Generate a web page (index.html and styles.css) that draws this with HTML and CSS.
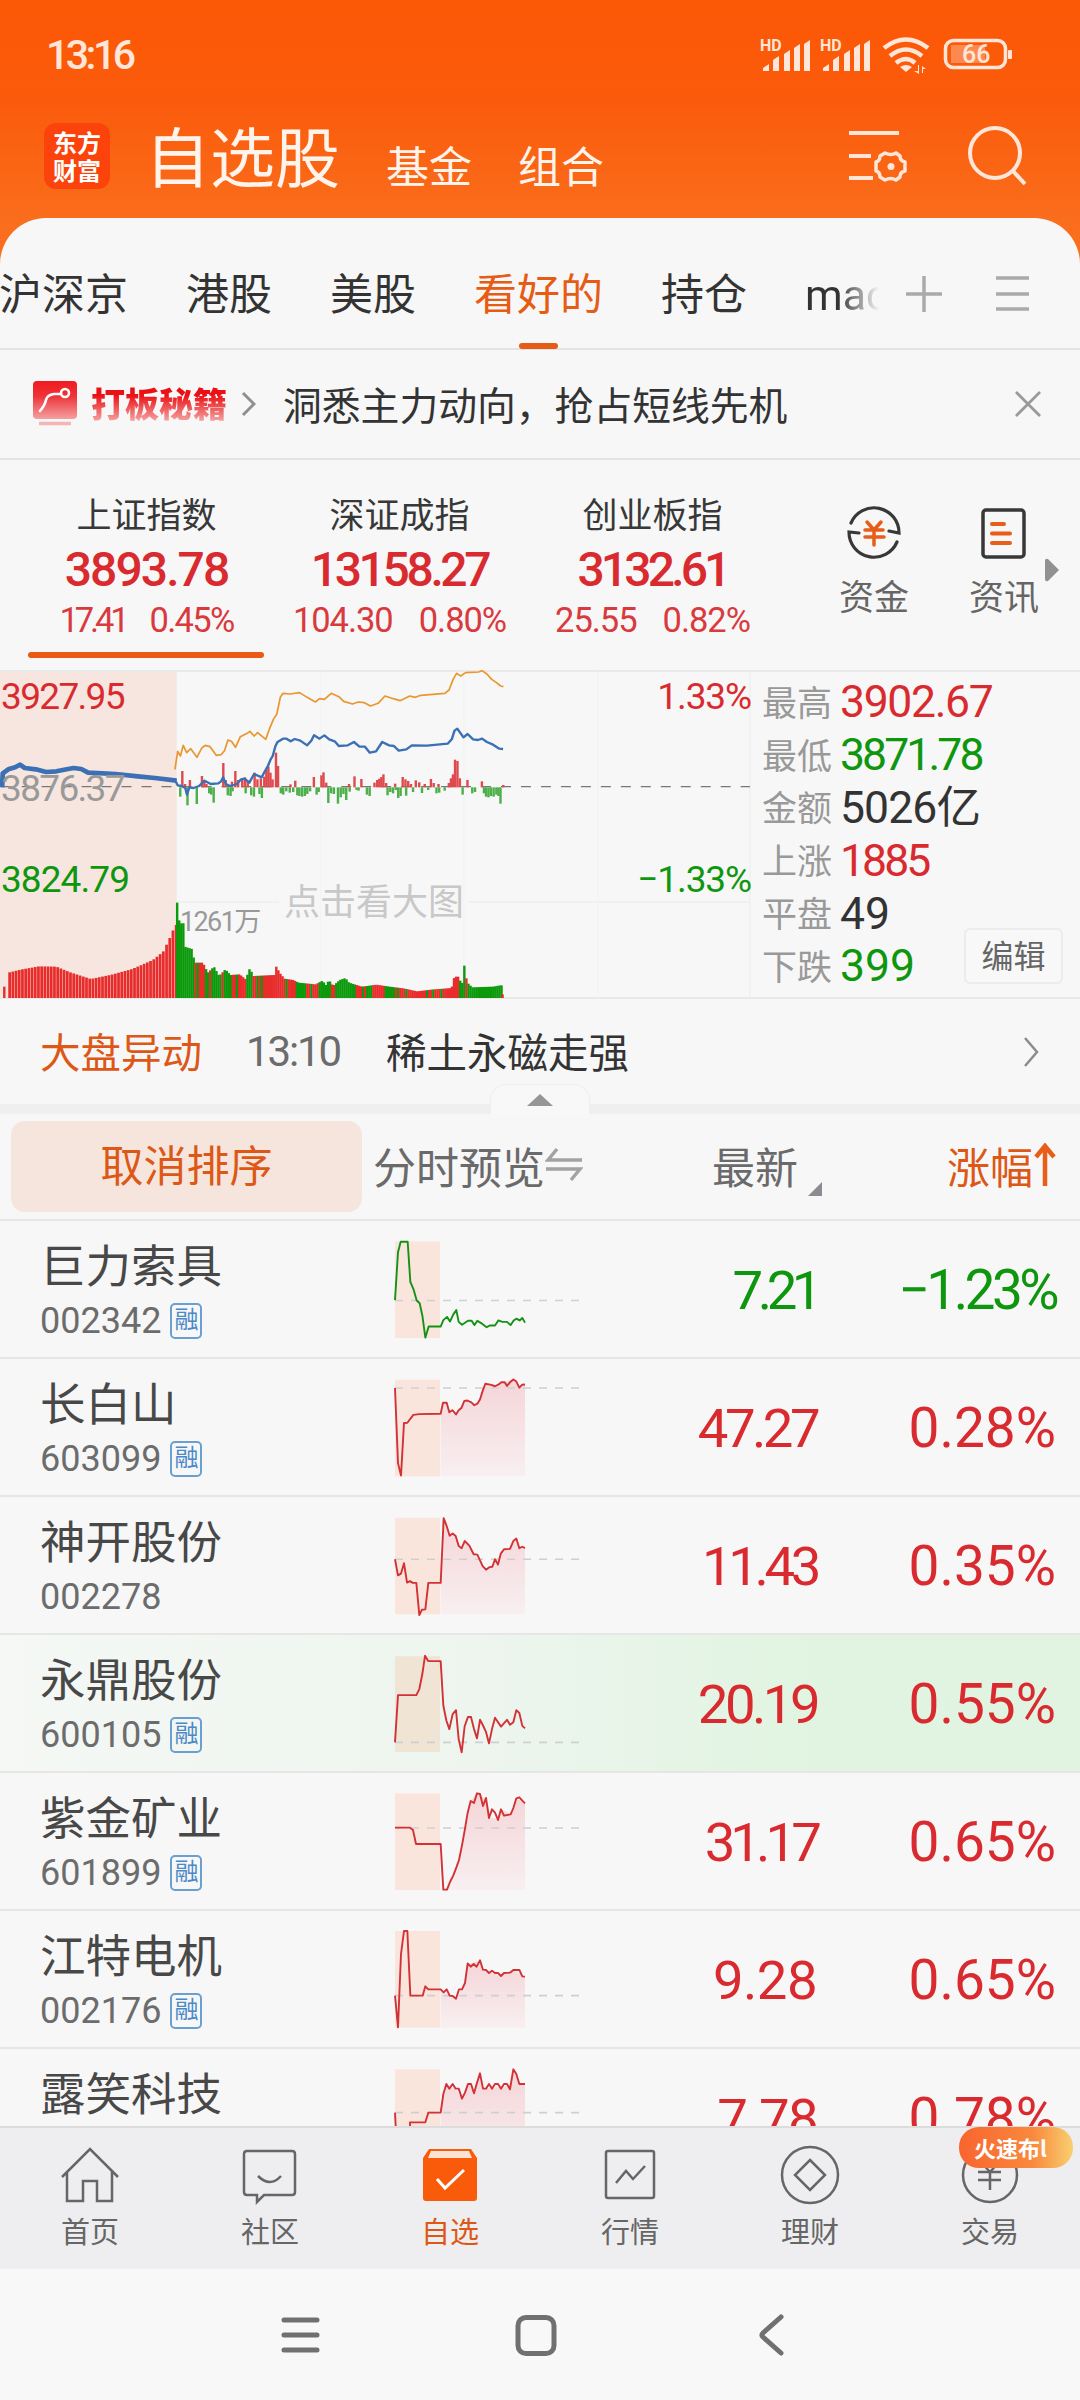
FILE: index.html
```html
<!DOCTYPE html>
<html lang="zh-CN">
<head>
  <meta charset="UTF-8">
  <title>自选股</title>
  <link rel="stylesheet" href="styles.css">
</head>
<body>
  <!-- Status bar -->
  <div class="status">
    <span class="clock">13:16</span>
    <svg class="status-icons" width="260" height="44" viewBox="0 0 260 44">
      <g fill="#ffe6d8">
        <text x="0" y="15" class="hd">HD</text>
        <text x="60" y="15" class="hd">HD</text>
        <path d="M3 35v-3l6-4v7zM13 35V24l6-4v15zM24 35V18l6-4v21zM34 35V12l6-4v27zM44 35V8l6-4v31z"/>
        <path d="M63 35v-3l6-4v7zM73 35V24l6-4v15zM84 35V18l6-4v21zM94 35V12l6-4v27zM104 35V8l6-4v31z"/>
        <path d="M140 31l6 5 6-5q-6-4-12 0z"/>
        <path d="M158 29v6h-4l5 3v-9zM162 37v-7l4 3h-3v4z"/>
        <rect x="248" y="14" width="4" height="9" rx="1"/>
        <rect x="191" y="9" width="34" height="18" opacity=".35"/>
      </g>
      <g fill="none" stroke="#ffe6d8">
        <path d="M124 12q22-17 44 0M130 20q16-13 32 0M136 27q10-8 19 0" stroke-width="4.5"/>
        <rect x="185.500" y="4.500" width="60" height="27" rx="8" stroke-width="3.500"/>
      </g>
      <text x="202" y="27" class="battery">66</text>
    </svg>
  </div>

  <!-- App header -->
  <div class="header">
    <div class="logo"><span>东方</span><span>财富</span></div>
    <span class="title">自选股</span>
    <span class="sub">基金</span>
    <span class="sub">组合</span>
    <svg class="manage" width="62" height="60" viewBox="0 0 62 60" fill="none" stroke="#ffe6d8" stroke-width="4">
      <path d="M1 7h50M1 30h22M1 52h24"/>
      <path d="M37 27q6 3 11 0l4 3q0 5 5 6v9q-5 1-5 6l-4 3q-5-3-11 0l-5-3q0-5-4-6v-9q4-1 4-6z" stroke-width="3.500" stroke-linejoin="round"/>
      <circle cx="43" cy="40.500" r="3.500" fill="#ffe6d8" stroke="none"/>
    </svg>
    <svg width="62" height="62" viewBox="0 0 62 62" fill="none" stroke="#ffe6d8" stroke-width="4">
      <circle cx="29" cy="29" r="25"/><path d="M46 46l13 14"/>
    </svg>
  </div>

  <div class="sheet">
    <!-- Group tabs -->
    <div class="tabs">
      <span>沪深京</span>
      <span>港股</span>
      <span>美股</span>
      <span class="active">看好的</span>
      <span>持仓</span>
      <span class="fade">mac</span>
      <svg class="tab-tools" width="124" height="40" viewBox="0 0 124 40" stroke="#aaa" stroke-width="3.500">
        <path d="M0 20h36M18 2v36M90 4h33M90 20h33M90 35h33"/>
      </svg>
    </div>

    <!-- Promo strip -->
    <div class="promo">
      <svg width="44" height="46" viewBox="0 0 44 46">
        <defs>
          <linearGradient id="promoRed" x1="0" y1="0" x2="0" y2="1">
            <stop offset="0" stop-color="#ef1a1f"/><stop offset=".4" stop-color="#ee3338"/><stop offset="1" stop-color="#f4a0a0"/>
          </linearGradient>
          <linearGradient id="areaRed" x1="0" y1="0" x2="0" y2="1">
            <stop offset="0" stop-color="#f5d5d8"/><stop offset="1" stop-color="#f8eff1"/>
          </linearGradient>
        </defs>
        <rect width="44" height="38" rx="4" fill="url(#promoRed)"/>
        <path d="M7 30q5-6 6-11t8-6h7" fill="none" stroke="#fff" stroke-width="2.600" stroke-linecap="round"/>
        <circle cx="32" cy="12" r="4" fill="none" stroke="#fff" stroke-width="2.600"/>
        <path d="M6 42.500h32" stroke="#f3b5b5" stroke-width="3.500"/>
      </svg>
      <b>打板秘籍</b>
      <svg width="15" height="26" viewBox="0 0 15 26" fill="none" stroke="#8f8f8f" stroke-width="3"><path d="M2 2l11 11L2 24"/></svg>
      <span>洞悉主力动向，抢占短线先机</span>
      <svg class="close" width="28" height="28" viewBox="0 0 28 28" stroke="#999" stroke-width="2.800"><path d="M2 2l24 24M26 2L2 26"/></svg>
    </div>

    <!-- Market indexes -->
    <div class="indexes">
      <div class="index current">
        <span>上证指数</span>
        <strong class="ls4">3893.78</strong>
        <p><i class="ls10">17.41</i><i>0.45%</i></p>
      </div>
      <div class="index">
        <span>深证成指</span>
        <strong class="ls7">13158.27</strong>
        <p><i>104.30</i><i>0.80%</i></p>
      </div>
      <div class="index">
        <span>创业板指</span>
        <strong class="ls8">3132.61</strong>
        <p><i>25.55</i><i>0.82%</i></p>
      </div>
      <div class="quick">
        <svg width="56" height="56" viewBox="0 0 56 56" fill="none" stroke="#383838" stroke-width="3.200" stroke-linecap="round">
          <path d="M5 18a25 25 0 0 1 48 10l-10-2M51 37A25 25 0 0 1 3 27l10 1"/>
          <path d="M21 17l7 8 7-8M19 25h18M19 32h19M28 25v15" stroke="#e85d17" stroke-width="3.500"/>
        </svg>
        <span>资金</span>
      </div>
      <div class="quick news">
        <svg width="56" height="56" viewBox="0 0 56 56" fill="none" stroke="#383838" stroke-width="3.500" stroke-linecap="round">
          <rect x="7" y="5" width="41" height="47" rx="3"/>
          <path d="M16 19h12M16 28.500h18M16 38h18" stroke="#e85d17" stroke-width="4"/>
        </svg>
        <span>资讯</span>
      </div>
      <svg class="more" width="14" height="24" viewBox="0 0 14 24" fill="#919191"><path d="M0 3Q0 0 3 1l11 11L3 23Q0 24 0 21z"/></svg>
    </div>

    <!-- Index chart -->
    <div class="market">
      <div class="chart">
        <svg width="751" height="330" viewBox="0 60 2181 990" preserveAspectRatio="none" fill="none">
          <rect x="0" y="66" width="513" height="978" fill="#f6e6df"/>
          <path d="M0 756H810M1362 756H2178M0 1044H2178M2178 60V1044" stroke="#e9e9e9" stroke-width="2.500"/>
          <path d="M1347 60V1044M930 60V1044M1737 60V1044" stroke="#f1f1f1" stroke-width="2.500"/>
          <path d="M0 410H2178" stroke="#777" stroke-width="4" stroke-dasharray="29 29" stroke-dashoffset="-5"/>
          <g id="bars"></g>
          <path d="M6 412L8 370 24 358 44 352 58 344 72 354 104 358 134 366 164 364 194 358 214 354 236 357 256 368 336 372 400 379 450 384 513 392" stroke="#3c70b4" stroke-width="14" stroke-linejoin="round"/>
          <path d="M508 390L516 406 528 408 538 414 543 434 550 412 562 414 578 408 594 392 612 402 634 400 642 394 648 382 656 402 668 408 688 402 700 388 710 386 724 398 738 372 760 382 768 366 778 348 786 328 792 318 800 288 806 276 822 266 832 266 844 274 856 267 872 272 892 286 904 272 912 256 928 266 942 256 956 268 972 274 984 288 1010 286 1028 276 1044 290 1060 290 1074 308 1092 304 1110 276 1130 286 1144 288 1158 302 1180 298 1196 286 1240 287 1300 281 1312 268 1320 242 1328 236 1346 262 1358 252 1374 268 1388 270 1400 266 1414 276 1432 284 1450 296 1461 297" stroke="#3c70b4" stroke-width="7" stroke-linejoin="round"/>
          <path d="M508 358l8-54 8 14 8-32 10 22 12-12 18 26 14-28 10-8 14 4 18 26 14-2 10-12 10-32 10 4 12 18 14-32 20-10 8-6 12 14 10-10 24 20 10-30 12-30 10-16 10-50 8-12 20 2 28-4 22 14 24 14 12-10 14 2 20-18 22 10 14 14 26 8 16-6 18 2 18 10 22-8 20-22 24 8 20 6 28-14 16 4 16-6 70-6 12-10 12-32 10-18 12 8 14-10 38-2 10-4 14 10 14 16 14 10 12 10 8 2" stroke="#e9972f" stroke-width="5" stroke-linejoin="round"/>
        </svg>
        <span class="high red">3927.95</span>
        <span class="mid">3876.37</span>
        <span class="low green">3824.79</span>
        <span class="high right red">1.33%</span>
        <span class="low right green">−1.33%</span>
        <span class="volume">1261万</span>
        <span class="hint">点击看大图</span>
      </div>
      <dl class="stats">
        <div><dt>最高</dt><dd class="red ls3">3902.67</dd></div>
        <div><dt>最低</dt><dd class="green ls6">3871.78</dd></div>
        <div><dt>金额</dt><dd class="ls2">5026亿</dd></div>
        <div><dt>上涨</dt><dd class="red ls6">1885</dd></div>
        <div><dt>平盘</dt><dd>49</dd></div>
        <div><dt>下跌</dt><dd class="green">399</dd></div>
        <button>编辑</button>
      </dl>
    </div>

    <!-- Market alert -->
    <div class="alert">
      <span class="orange">大盘异动</span>
      <time>13:10</time>
      <span>稀土永磁走强</span>
      <svg width="18" height="34" viewBox="0 0 18 34" fill="none" stroke="#8c8c8c" stroke-width="2.500"><path d="M3 3l12 14L3 31"/></svg>
    </div>
    <div class="band"><div class="handle"></div></div>

    <!-- Watch list -->
    <div class="list-head">
      <div class="cancel">取消排序</div>
      <div class="preview">分时预览<svg width="38" height="36" viewBox="0 0 38 36" fill="none" stroke="#a3a3a3" stroke-width="3.500"><path d="M12 2L3 13h34M1 22h34L26 33"/></svg></div>
      <div class="latest">最新</div>
      <div class="change">涨幅<svg width="24" height="44" viewBox="0 0 24 44" fill="none" stroke="#e85d17" stroke-width="4.500"><path d="M12 43V4M3 14l9-11 9 11"/></svg></div>
    </div>
    <div class="list">
      <div class="row">
        <div class="stock"><b>巨力索具</b><span>002342<em>融</em></span></div>
        <svg class="spark" viewBox="0 26 720 386" preserveAspectRatio="none">
          <rect x="105" y="86" width="135" height="270"/>
          <path class="base" d="M105 251H660"/>
          <path class="line down" d="M105 250l9-134 8-29h21l8 112 10 22 9 30 9 8 8 34 9 62 10-31h36l8-18 11-9 9 13 10-20 9-12 7 33 10 8 18-11h11l8 12 9-12 14 8 14 10 9-5h16l10-14 12 4h14l11 9 9-13 8-5 10 5 8-7 8 13"/>
        </svg>
        <div class="price green ls10">7.21</div><div class="pct green ls6">−1.23%</div>
      </div>
      <div class="row">
        <div class="stock"><b>长白山</b><span>603099<em>融</em></span></div>
        <svg class="spark" viewBox="0 412 720 386" preserveAspectRatio="none">
          <rect x="105" y="473" width="135" height="270"/>
          <path class="area" d="M242 568L249 537 260 537 268 562 288 570 313 532 342 543 360 528 376 485 405 491 432 480 460 472 478 495 495 486V743H242z"/>
          <path class="base" d="M105 496H660"/>
          <path class="line" d="M105 496L114 706 123 741 132 594 142 593 160 571 178 569 242 568 249 537 260 537 268 564 277 558 288 570 296 558 304 552 313 532 322 531 334 536 343 544 352 540 360 528 368 504 376 484 394 487 405 491 416 486 424 480 434 480 441 490 450 480 460 472 469 478 478 495 486 487 495 486"/>
        </svg>
        <div class="price ls6">47.27</div><div class="pct">0.28%</div>
      </div>
      <div class="row">
        <div class="stock"><b>神开股份</b><span>002278</span></div>
        <svg class="spark" viewBox="0 798 720 386" preserveAspectRatio="none">
          <rect x="105" y="859" width="135" height="270"/>
          <path class="area" d="M242 1040L251 862 269 908 286 908 304 945 315 924 342 960 376 1003 396 996 432 947 450 946 469 918 478 945 495 944V1129H242z"/>
          <path class="base" d="M105 975H660"/>
          <path class="line" d="M105 975L114 1020 123 1015 132 986 141 1040 150 1036 158 1041 169 1041 178 1131 186 1116 196 1115 205 1041 242 1041 251 860 260 882 269 909 278 903 287 910 296 938 305 944 314 924 328 937 341 961 352 962 368 994 378 1004 388 997 397 996 405 975 414 990 422 960 432 947 450 946 460 924 469 917 478 944 487 940 495 944"/>
        </svg>
        <div class="price ls8">11.43</div><div class="pct">0.35%</div>
      </div>
      <div class="row flash">
        <div class="stock"><b>永鼎股份</b><span>600105<em>融</em></span></div>
        <svg class="spark" viewBox="0 1184 720 386" preserveAspectRatio="none">
          <rect x="105" y="1246" width="135" height="268"/>
          <path class="base" d="M105 1487H660"/>
          <path class="line" d="M105 1487L114 1355 169 1355 178 1338 187 1296 195 1245 205 1260 242 1260 250 1384 259 1426 268 1450 278 1408 288 1397 296 1478 305 1515 314 1442 324 1416 333 1416 342 1450 351 1476 360 1424 369 1440 378 1458 387 1490 396 1450 405 1418 423 1443 441 1424 450 1438 460 1431 469 1397 478 1405 487 1441 495 1448"/>
        </svg>
        <div class="price ls6">20.19</div><div class="pct">0.55%</div>
      </div>
      <div class="row">
        <div class="stock"><b>紫金矿业</b><span>601899<em>融</em></span></div>
        <svg class="spark" viewBox="0 4 720 414" preserveAspectRatio="none">
          <rect x="105" y="68" width="135" height="290"/>
          <path class="area" d="M262 356L296 266 316 166 332 92 350 68 378 84 387 140 414 146 423 116 452 130 469 82 495 97V358H262z"/>
          <path class="base" d="M105 172H660"/>
          <path class="line" d="M105 171L150 171 159 178 168 220 242 220 250 357 261 357 270 334 280 314 290 288 297 268 306 224 315 174 323 126 332 91 342 97 351 68 360 70 369 106 378 82 387 142 396 116 405 126 414 148 423 116 432 135 452 131 460 112 469 83 478 80 487 90 495 98"/>
        </svg>
        <div class="price ls9">31.17</div><div class="pct">0.65%</div>
      </div>
      <div class="row">
        <div class="stock"><b>江特电机</b><span>002176<em>融</em></span></div>
        <svg class="spark" viewBox="0 418 720 414" preserveAspectRatio="none">
          <rect x="105" y="481" width="135" height="290"/>
          <path class="area" d="M242 657L288 683 314 638 323 580 360 570 369 598 423 616 460 598 495 618V771H242z"/>
          <path class="base" d="M105 675H660"/>
          <path class="line" d="M105 675L114 770 123 550 132 481 142 481 151 675 188 675 196 647 205 656 242 656 251 665 260 656 269 675 278 676 288 684 297 656 306 656 315 637 323 578 332 588 341 580 350 588 360 569 369 597 378 598 387 607 396 600 405 607 414 607 423 616 432 607 450 606 460 598 478 598 487 617 495 618"/>
        </svg>
        <div class="price ls1">9.28</div><div class="pct">0.65%</div>
      </div>
      <div class="row">
        <div class="stock"><b>露笑科技</b><span>002617</span></div>
        <svg class="spark" viewBox="0 832 720 414" preserveAspectRatio="none">
          <rect x="105" y="896" width="135" height="290"/>
          <path class="area" d="M242 1026L256 940 286 954 306 984 326 940 342 966 360 912 370 954 446 946 460 896 478 940 495 940V1186H242z"/>
          <path class="base" d="M105 1026H660"/>
          <path class="line" d="M105 1026L108 1086M150 1080L150 1055 196 1055 205 1026 242 1026 250 970 259 940 268 954 278 940 287 954 296 954 306 984 315 966 324 940 333 940 342 968 351 936 360 908 369 954 378 954 387 940 396 954 405 940 414 940 423 954 432 940 441 940 450 956 460 896 469 910 478 940 495 940"/>
        </svg>
        <div class="price ls3">7.78</div><div class="pct">0.78%</div>
      </div>
    </div>
  </div>

  <!-- Bottom tabs -->
  <div class="bottom-nav">
    <div class="item">
      <svg width="60" height="60" viewBox="0 0 60 60"><path d="M2 32L30 4l28 28M7 27v29h16V36h14v20h15V27"/></svg>
      <span>首页</span>
    </div>
    <div class="item">
      <svg width="60" height="60" viewBox="0 0 60 60"><path d="M7 6h45q3 0 3 3v38q0 3-3 3H24l-7 7v-7H7q-3 0-3-3V9q0-3 3-3zM18 31q12 12 23 0"/></svg>
      <span>社区</span>
    </div>
    <div class="item on">
      <svg width="60" height="60" viewBox="0 0 60 60">
        <path d="M9 4h42l6 9v40q0 3-3 3H6q-3 0-3-3V13z" fill="#f95b0b" stroke="none"/>
        <path d="M11 6h38l3 7H8z" fill="#fde3d3" stroke="none"/>
        <path d="M17 34l8 9 19-18" stroke="#fff" stroke-width="3"/>
      </svg>
      <span>自选</span>
    </div>
    <div class="item">
      <svg width="60" height="60" viewBox="0 0 60 60"><rect x="6" y="6" width="48" height="47" rx="2"/><path d="M16 38l10-12 7 8 12-13"/></svg>
      <span>行情</span>
    </div>
    <div class="item">
      <svg width="60" height="60" viewBox="0 0 60 60"><circle cx="30" cy="30" r="28"/><path d="M30 15l15 15-15 15-15-15z"/></svg>
      <span>理财</span>
    </div>
    <div class="item">
      <svg width="60" height="60" viewBox="0 0 60 60"><circle cx="30" cy="30" r="27"/><path d="M20 16l10 11 10-11M18 27h23M18 35h23M30 27v18"/></svg>
      <span>交易</span>
      <div class="tag">火速布l</div>
    </div>
  </div>

  <!-- System navigation -->
  <div class="system">
    <svg width="510" height="50" viewBox="0 0 510 50" fill="none" stroke="#707070" stroke-width="5" stroke-linecap="round" stroke-linejoin="round">
      <path d="M5 10h33M5 25h33M5 40h33"/>
      <rect x="239" y="7.500" width="36" height="36" rx="8"/>
      <path d="M502 7L484 23q-2 2 0 4l18 16"/>
    </svg>
  </div>

  <script>
    const bars = document.getElementById('bars');

    function bar(x, top, bottom, color, width) {
      bars.innerHTML += `<rect x="${x}" y="${top}" width="${width}" height="${bottom - top}" fill="${color}"/>`;
    }

    // linear interpolation between [x, y] points
    function at(points, x) {
      for (let i = 1; i < points.length; i++) {
        if (x <= points[i][0]) {
          const [x0, y0] = points[i - 1];
          const [x1, y1] = points[i];
          return y0 + (y1 - y0) * (x - x0) / (x1 - x0);
        }
      }
      return points[points.length - 1][1];
    }

    // call auction volume
    const auction = [[24, 967], [55, 959], [110, 949], [160, 950], [200, 967], [260, 987], [320, 974], [380, 957], [440, 930], [470, 905], [490, 862], [505, 825]];
    bar(9, 1010, 1044, '#e82c2c', 7);
    for (let x = 24; x < 508; x += 9.3) {
      bar(x, at(auction, x), 1044, '#e82c2c', 8);
    }

    // session volume, green ranges are falling minutes
    const session = [[508, 960], [513, 758], [520, 820], [532, 820], [535, 890], [556, 897], [564, 938], [588, 938], [602, 968], [620, 950], [635, 978], [653, 958], [668, 975], [695, 973], [712, 988], [724, 955], [735, 978], [795, 975], [801, 950], [812, 970], [825, 986], [850, 990], [866, 998], [915, 1003], [935, 992], [945, 1005], [954, 990], [966, 1008], [985, 990], [1002, 984], [1012, 998], [1050, 1010], [1092, 1004], [1130, 1010], [1170, 1015], [1210, 1024], [1250, 1019], [1310, 1014], [1318, 980], [1332, 980], [1337, 1000], [1344, 998], [1348, 930], [1354, 996], [1370, 1012], [1430, 1010], [1452, 1006]];
    const falling = [[511, 538], [542, 562], [570, 575], [598, 608], [616, 640], [648, 672], [684, 688], [715, 732], [744, 748], [756, 762], [828, 836], [858, 888], [904, 908], [928, 958], [975, 995], [999, 1030], [1050, 1054], [1065, 1082], [1115, 1145], [1154, 1158], [1178, 1184], [1236, 1240], [1254, 1262], [1278, 1284], [1335, 1350], [1360, 1456]];
    for (let x = 511; x < 1456; x += 6) {
      const green = falling.some(r => x >= r[0] - 3 && x <= r[1] - 2);
      bar(x, at(session, x + 2), 1044, green ? '#0c9a0c' : '#e82c2c', 7);
    }
    bar(1456, 1033, 1044, '#e82c2c', 7);

    // buy / sell strength around the previous close
    const up = [[526, 363], [534, 402], [548, 390], [583, 378], [590, 392], [596, 402], [645, 339], [652, 390], [670, 395], [680, 363], [688, 390], [700, 388], [708, 382], [716, 392], [736, 368], [744, 388], [754, 385], [764, 380], [770, 360], [776, 350], [782, 368], [788, 388], [798, 308], [804, 348], [840, 403], [854, 392], [908, 381], [930, 376], [936, 367], [944, 398], [1010, 402], [1026, 379], [1046, 387], [1084, 398], [1092, 390], [1098, 386], [1104, 381], [1110, 373], [1118, 399], [1144, 401], [1166, 381], [1174, 388], [1182, 393], [1190, 402], [1204, 391], [1214, 397], [1230, 402], [1248, 387], [1256, 399], [1270, 402], [1300, 399], [1306, 385], [1312, 373], [1318, 329], [1325, 333], [1332, 385], [1354, 390], [1396, 394], [1458, 405]];
    const down = [[520, 440], [541, 466], [556, 415], [568, 462], [604, 430], [610, 434], [617, 458], [658, 436], [666, 438], [672, 424], [710, 430], [726, 436], [734, 440], [750, 432], [757, 444], [812, 430], [819, 434], [828, 424], [838, 428], [848, 426], [860, 436], [866, 438], [874, 440], [882, 438], [889, 432], [897, 424], [916, 434], [922, 426], [950, 459], [958, 430], [966, 432], [978, 461], [986, 442], [994, 432], [1002, 450], [1012, 425], [1032, 420], [1038, 422], [1062, 434], [1070, 438], [1122, 436], [1130, 426], [1138, 430], [1146, 420], [1153, 444], [1160, 438], [1176, 437], [1196, 426], [1222, 429], [1240, 420], [1264, 430], [1272, 428], [1288, 422], [1340, 434], [1368, 430], [1376, 426], [1402, 430], [1408, 440], [1415, 442], [1422, 438], [1430, 440], [1438, 434], [1444, 438], [1450, 461]];
    up.forEach(p => bar(p[0], p[1], 412, '#de4a4e', 7));
    down.forEach(p => bar(p[0], 412, p[1], '#4caf4a', 7));
  </script>
</body>
</html>
```
FILE: styles.css
```css
* { box-sizing: border-box; }
body { margin: 0; width: 1080px; height: 2400px; overflow: hidden; background: #f7f7f7; color: #333; font-family: Roboto, "Noto Sans CJK SC", sans-serif; background-image: linear-gradient(#fc5806 0, #fa5b0b 100px, #fa6d1c 218px, #f97021 270px, #f7f7f7 270px); }
svg { display: block; flex: none; }
p, dl, dd { margin: 0; }
i, em { font-style: normal; }
.red { color: #d92b2f; }
.green { color: #0f960f; }
.orange { color: #dd5816; }

/* number tracking */
.ls1 { letter-spacing: -0.01em; }
.ls2 { letter-spacing: -0.02em; }
.ls3 { letter-spacing: -0.03em; }
.ls4 { letter-spacing: -0.04em; }
.ls6 { letter-spacing: -0.065em; }
.ls7 { letter-spacing: -0.07em; }
.ls8 { letter-spacing: -0.08em; }
.ls9 { letter-spacing: -0.09em; }
.ls10 { letter-spacing: -0.1em; }

/* status bar */
.status { height: 109px; padding: 16px 64px 0 46px; display: flex; justify-content: space-between; color: #ffe6d8; }
.clock { font-size: 41px; font-weight: 500; line-height: 78px; letter-spacing: -3.5px; }
.status-icons { margin: 20px -4px 0 0; }
.hd { font: 700 16px Roboto, sans-serif; }
.battery { font: 500 25px Roboto, sans-serif; fill: #ffe6d8; }

/* app header */
.header { height: 109px; padding: 0 52px 0 44px; display: flex; color: #fff4ec; }
.logo { width: 66px; height: 66px; margin: 14px 35px 0 0; padding-top: 5px; border-radius: 12px; background: #fb430b; display: flex; flex-direction: column; align-items: center; font-family: "Noto Sans CJK SC", sans-serif; font-weight: 700; font-size: 24px; line-height: 28px; color: #fff; }
.title { font-size: 65px; line-height: 102px; margin-right: 46px; }
.sub { font-size: 43px; line-height: 119px; margin-right: 46px; }
.manage { margin: 17px 56px 0 auto; }
.header > svg:last-child { margin-top: 15px; }

.sheet { height: 1908px; overflow: hidden; border-radius: 46px 46px 0 0; background: #f7f7f7; }

/* group tabs */
.tabs { height: 132px; display: flex; align-items: center; padding-top: 18px; border-bottom: 2px solid #e3e3e3; font-size: 43px; gap: 58px; margin-left: -1px; }
.tabs span { position: relative; flex: none; height: 112px; line-height: 118px; }
.tabs .active { color: #e65c15; }
.tabs .active::after { content: ""; position: absolute; left: 45px; bottom: -1px; width: 39px; height: 6px; border-radius: 3px; background: #e65c15; }
.tabs .fade { width: 74px; overflow: hidden; background: linear-gradient(90deg, #333 45%, transparent); background-clip: text; -webkit-background-clip: text; color: transparent; }
.tab-tools { margin: 4px 0 0 -31px; }

/* promo */
.promo { height: 110px; padding: 0 38px 0 33px; display: flex; align-items: center; border-bottom: 2px solid #e3e3e3; font-size: 38.8px; }
.promo b { margin: -3px 14px 0 14px; font-size: 34px; font-weight: 900; background: linear-gradient(#ea1014 35%, #f59a9a 85%); background-clip: text; -webkit-background-clip: text; color: transparent; }
.promo span { margin: -3px 0 0 27px; }
.promo .close { margin-left: auto; }

/* indexes */
.indexes { position: relative; height: 210px; padding-left: 20px; display: flex; }
.index { position: relative; width: 253px; padding-top: 31px; display: flex; flex-direction: column; align-items: center; }
.index span { font-size: 35px; line-height: 52px; color: #383838; }
.index strong { font-size: 48px; line-height: 54px; font-weight: 500; color: #d92b2f; }
.index p { display: flex; gap: 26px; font-size: 34.500px; line-height: 47px; color: #d93a3e; }
.index p i { letter-spacing: -0.03em; }
.current p { gap: 24px; }
.current p i { letter-spacing: -0.05em; }
.current p .ls10 { letter-spacing: -0.12em; }
.current::after { content: ""; position: absolute; left: 8px; top: 192px; width: 236px; height: 6px; border-radius: 3px; background: #ea5a14; }
.quick { width: 130px; margin-left: 30px; padding-top: 45px; display: flex; flex-direction: column; align-items: center; font-size: 35px; line-height: 75px; color: #666; }
.news { margin-left: 0; }
.more { position: absolute; right: 21px; top: 98px; }

/* market chart */
.market { height: 329px; display: flex; border-top: 2px solid #e9e9e9; border-bottom: 2px solid #e9e9e9; }
.chart { position: relative; width: 751px; }
.chart svg { margin-top: -2px; }
.chart span { position: absolute; left: 1px; font-size: 37px; line-height: 44px; letter-spacing: -0.045em; }
.chart .high { top: 3px; }
.chart .mid { top: 95px; color: #999; }
.chart .low { top: 186px; letter-spacing: -0.025em; }
.chart .right { left: auto; right: 0; letter-spacing: -0.03em; }
.chart .volume { left: 180px; top: 228px; font-size: 27px; letter-spacing: -0.06em; color: #999; }
.chart .hint { left: 284px; top: 206px; font-size: 36px; line-height: 50px; letter-spacing: 0; color: #c8c8c8; }
.stats { position: relative; flex: 1; padding: 4px 0 0 11px; }
.stats div { display: flex; align-items: center; height: 52.800px; font-size: 35px; }
.stats dt { width: 78px; margin-top: -4px; color: #999; }
.stats dd { font-size: 44.500px; line-height: 52px; }
.stats button { position: absolute; right: 17px; top: 256px; width: 99px; height: 56px; padding: 0 0 5px; border: 2px solid #ececec; border-radius: 6px; background: #f8f8f8; color: #666; font: 32px "Noto Sans CJK SC", sans-serif; }

/* alert */
.alert { height: 105px; padding: 0 40px; display: flex; align-items: center; font-size: 40.500px; }
.alert span { margin-top: -3px; }
.alert time { margin: 0 46px 0 44px; font-size: 42px; letter-spacing: -0.05em; color: #6c6c6c; }
.alert svg { margin-left: auto; }
.band { height: 10px; background: #efeff0; }
.handle { position: relative; width: 100px; height: 30px; margin: 0 auto; top: -20px; left: 0; border-radius: 16px 16px 0 0; border: 1px solid #eee; border-bottom: 0; background: #f8f8f8; }
.handle::after { content: ""; position: absolute; left: 36px; top: 9px; border: 13px solid transparent; border-top: 0; border-bottom: 12px solid #969696; }

/* watch list */
.list-head { height: 107px; display: flex; align-items: center; border-bottom: 2px solid #e6e6e6; font-size: 43px; color: #6a6a6a; }
.cancel { width: 351px; height: 91px; margin-left: 11px; border-radius: 14px; background: #f6e5dd; color: #dd5816; text-align: center; line-height: 92px; }
.preview { margin: -3px 0 0 11px; display: flex; align-items: center; }
.latest { position: relative; margin: -3px 0 0 129px; }
.latest::after { content: ""; position: absolute; right: -24px; bottom: 0; border-left: 14px solid transparent; border-bottom: 14px solid #8b8b90; }
.change { margin: -3px 23px 0 auto; display: flex; align-items: center; color: #dd5816; }
.row { height: 138px; padding: 0 24px 0 40px; display: flex; align-items: center; border-bottom: 2px solid #e6e6e6; }
.flash { background: linear-gradient(90deg, #f5f8f5 0%, #edf5ee 45%, #e1f4e1 75%, #e1f4e1 100%); }
.stock { width: 320px; }
.stock b { display: block; padding-top: 3px; font-size: 45.500px; line-height: 60px; font-weight: 400; color: #484848; }
.stock span { display: flex; align-items: center; height: 46px; font-size: 36px; color: #6c6c6c; }
.stock em { width: 32px; height: 36px; margin-left: 9px; border: 2px solid #6a9fd2; border-radius: 5px; font-size: 24px; line-height: 31px; text-align: center; color: #4a89c8; }
.price { width: 220px; padding: 2px 3px 0 0; text-align: right; font-size: 54.500px; color: #d92b2f; }
.pct { width: 236px; padding-top: 2px; text-align: right; font-size: 55px; color: #d92b2f; }
.row .green { color: #0f960f; }
.spark { width: 240px; height: 138px; }
.spark rect { fill: #fae5dd; }
.flash .spark rect { fill: #f0e5d5; }
.spark path { fill: none; vector-effect: non-scaling-stroke; }
.spark .area { fill: url(#areaRed); }
.spark .base { stroke: #cfcfd2; stroke-width: 1.600px; stroke-dasharray: 8 8; }
.spark .line { stroke: #d23236; stroke-width: 1.900px; stroke-linejoin: round; }
.spark .down { stroke: #159215; }

/* bottom tabs */
.bottom-nav { height: 143px; display: flex; background: #eeeef0; border-top: 2px solid #dcdcdc; }
.item { position: relative; width: 180px; padding-top: 17px; display: flex; flex-direction: column; align-items: center; font-size: 29px; line-height: 57px; color: #666; }
.item svg { fill: none; stroke: #666; stroke-width: 2.500px; }
.on { color: #dd5816; }
.tag { position: absolute; left: 59px; top: -1px; width: 114px; height: 41px; padding-left: 15px; border-radius: 20px; background: linear-gradient(90deg, #f9642f, #f9893c 65%, #f9cf70); color: #fff; font-family: "Noto Sans CJK SC", sans-serif; font-weight: 700; font-size: 22px; line-height: 40px; white-space: nowrap; }

.system { height: 131px; padding: 41px 0 0 279px; background: #f8f8f8; }
```
